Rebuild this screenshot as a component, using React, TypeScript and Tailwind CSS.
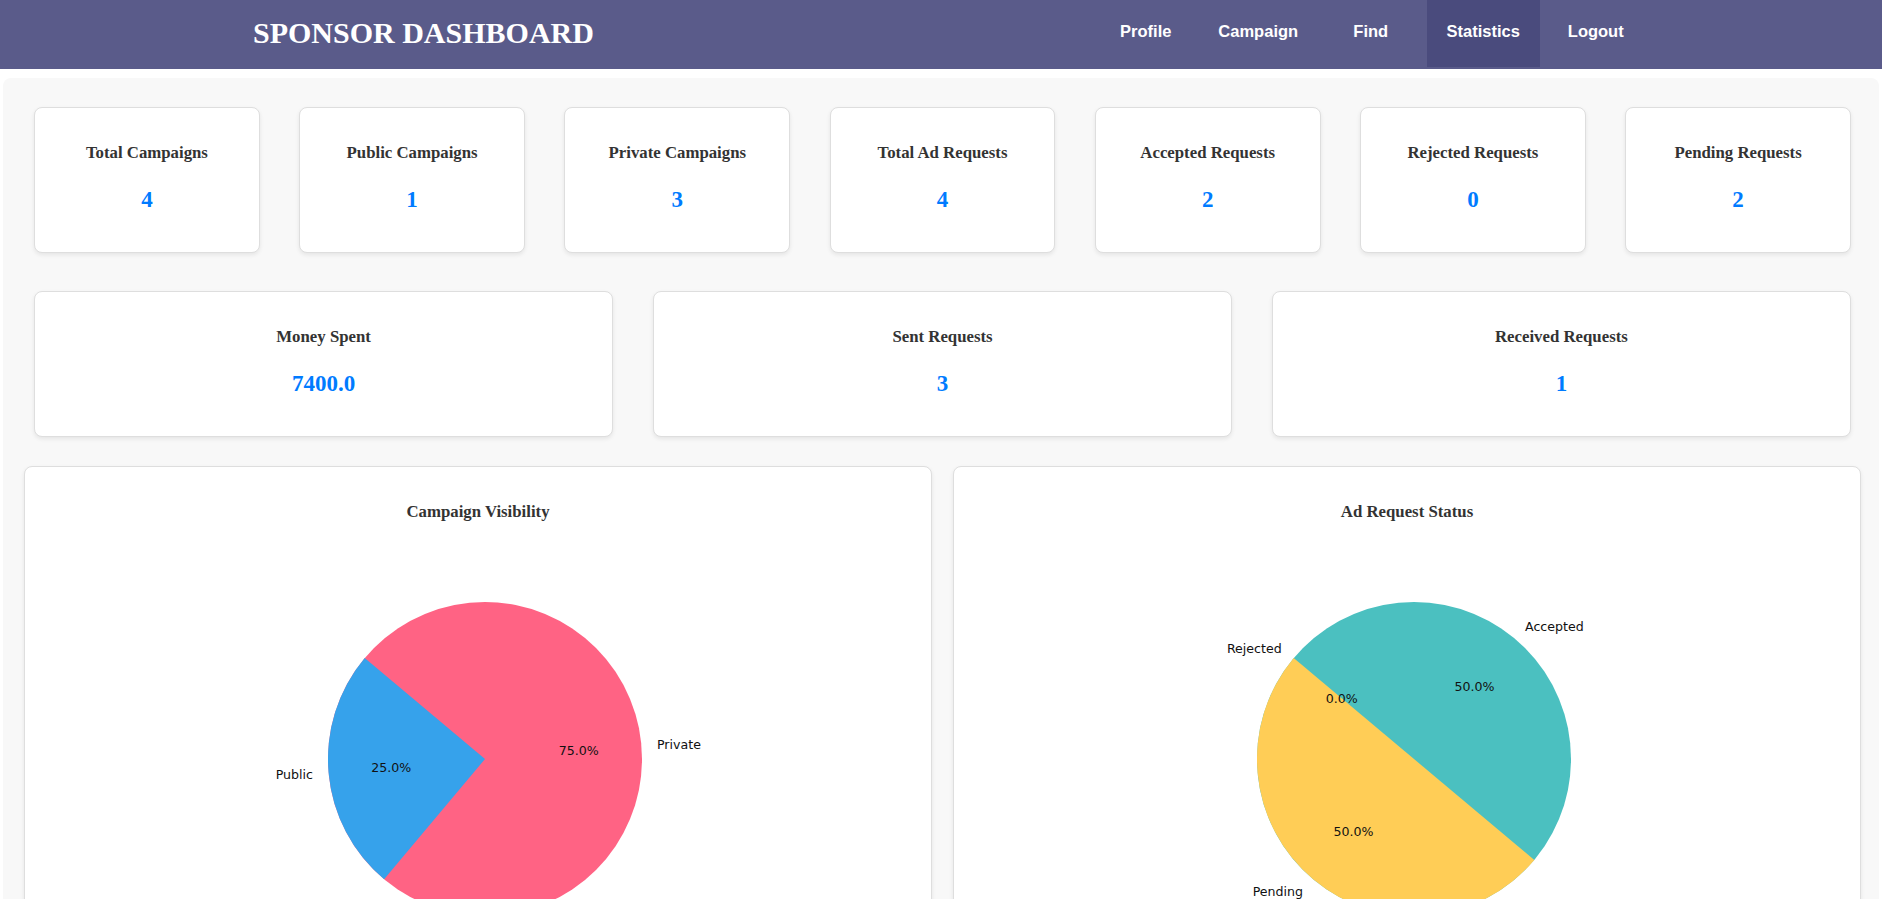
import React from 'react';

type Stat = {
  label: string;
  value: string;
};

const topStats: Stat[] = [
  { label: 'Total Campaigns', value: '4' },
  { label: 'Public Campaigns', value: '1' },
  { label: 'Private Campaigns', value: '3' },
  { label: 'Total Ad Requests', value: '4' },
  { label: 'Accepted Requests', value: '2' },
  { label: 'Rejected Requests', value: '0' },
  { label: 'Pending Requests', value: '2' },
];

const moneyStats: Stat[] = [
  { label: 'Money Spent', value: '7400.0' },
  { label: 'Sent Requests', value: '3' },
  { label: 'Received Requests', value: '1' },
];

const navLinks = ['Profile', 'Campaign', 'Find', 'Statistics', 'Logout'];

const serif = "font-['Liberation_Serif','Times_New_Roman',serif]";

const StatCard = ({ stat }: { stat: Stat }) => (
  <div className="flex h-[146px] flex-col items-center rounded-[8px] border border-[#dedede] bg-white pt-[35px] shadow-[0_2px_4px_rgba(0,0,0,0.08)]">
    <h5 className={`${serif} text-[16.8px] leading-[20px] font-bold text-[#333]`}>{stat.label}</h5>
    <p className={`${serif} mt-[23px] text-[23px] leading-[28px] font-bold text-[#007bff]`}>{stat.value}</p>
  </div>
);

type Label = { x: number; y: number; text: string; anchor: 'start' | 'middle' | 'end' };

const PieText = ({ labels }: { labels: Label[] }) => (
  <>
    {labels.map((l) => (
      <text
        key={l.text + l.x}
        x={l.x}
        y={l.y}
        textAnchor={l.anchor}
        dominantBaseline="central"
        fontFamily="'DejaVu Sans', sans-serif"
        fontSize="12.6"
        fill="#111"
      >
        {l.text}
      </text>
    ))}
  </>
);

const VisibilityPie = () => (
  <svg width="640" height="420" viewBox="0 0 640 420" className="mx-auto block">
    <circle cx="327" cy="237" r="157" fill="#ff6384" />
    <path d="M327 237 L206.7 136.1 A157 157 0 0 0 226.1 357.3 Z" fill="#36a2eb" />
    <PieText
      labels={[
        { x: 155, y: 252, text: 'Public', anchor: 'end' },
        { x: 233.2, y: 245.2, text: '25.0%', anchor: 'middle' },
        { x: 499, y: 222, text: 'Private', anchor: 'start' },
        { x: 420.8, y: 228.8, text: '75.0%', anchor: 'middle' },
      ]}
    />
  </svg>
);

const StatusPie = () => (
  <svg width="640" height="420" viewBox="0 0 640 420" className="mx-auto block">
    <circle cx="327" cy="237" r="157" fill="#4bc0c0" />
    <path d="M327 237 L206.7 136.1 A157 157 0 0 0 447.3 337.9 Z" fill="#ffcd56" />
    <PieText
      labels={[
        { x: 438, y: 104.7, text: 'Accepted', anchor: 'start' },
        { x: 387.6, y: 164.8, text: '50.0%', anchor: 'middle' },
        { x: 194.7, y: 126, text: 'Rejected', anchor: 'end' },
        { x: 254.8, y: 176.4, text: '0.0%', anchor: 'middle' },
        { x: 216, y: 369.3, text: 'Pending', anchor: 'end' },
        { x: 266.4, y: 309.2, text: '50.0%', anchor: 'middle' },
      ]}
    />
  </svg>
);

const ChartCard = ({ title, children }: { title: string; children: React.ReactNode }) => (
  <div className="flex flex-col items-center rounded-[8px] border border-[#dedede] bg-white pt-[35px] pb-[20px] shadow-[0_2px_4px_rgba(0,0,0,0.08)]">
    <h5 className={`${serif} text-[16.8px] leading-[20px] font-bold text-[#333]`}>{title}</h5>
    {children}
  </div>
);

const App = () => {
  return (
    <div className="min-h-screen bg-white">
      <header className="flex h-[69px] items-start justify-between bg-[#5a5b8a] pr-[230px] pl-[253px]">
        <h1 className={`${serif} mt-[15px] text-[30px] leading-[36px] font-bold text-white`}>SPONSOR DASHBOARD</h1>
        <nav className="flex">
          {navLinks.map((link) => (
            <a
              key={link}
              href="#"
              className={`flex h-[67px] w-[112.5px] items-center justify-center pb-[4px] font-['Liberation_Sans',Arial,sans-serif] text-[16.5px] font-bold text-white ${
                link === 'Statistics' ? 'bg-[#4a4b7d]' : ''
              }`}
            >
              {link}
            </a>
          ))}
        </nav>
      </header>

      <main className="mx-[3px] mt-[9px] rounded-[8px] bg-[#f8f8f8] pt-[29px]">
        <div className="grid grid-cols-7 gap-x-[39.4px] pr-[28px] pl-[31px]">
          {topStats.map((s) => (
            <StatCard key={s.label} stat={s} />
          ))}
        </div>

        <div className="mt-[38px] grid grid-cols-3 gap-x-[39.7px] pr-[28px] pl-[31px]">
          {moneyStats.map((s) => (
            <StatCard key={s.label} stat={s} />
          ))}
        </div>

        <div className="mt-[29px] grid grid-cols-2 gap-x-[21px] pr-[18px] pb-[20px] pl-[21px]">
          <ChartCard title="Campaign Visibility">
            <VisibilityPie />
          </ChartCard>
          <ChartCard title="Ad Request Status">
            <StatusPie />
          </ChartCard>
        </div>
      </main>
    </div>
  );
};

export default App;
